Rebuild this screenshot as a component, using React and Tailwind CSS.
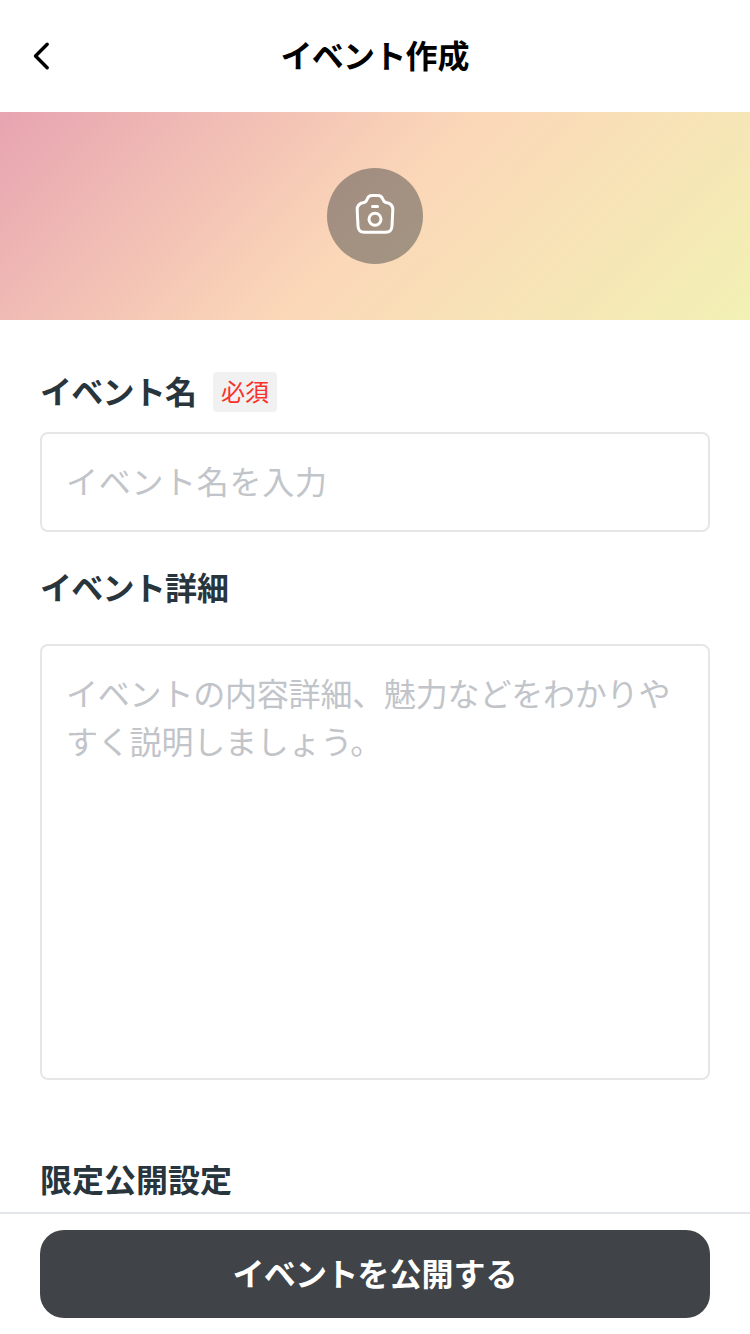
function CameraIcon() {
    return (
        <svg className="h-12 w-12" viewBox="0 0 48 48" fill="none" stroke="white" strokeWidth="3" strokeLinecap="round" strokeLinejoin="round">
            <path d="M21 3.6H27C29.4 3.6 30.8 4.8 31.6 6.8C32.4 9 33.2 10.1 35.2 10.6C39.8 11.4 42 13.6 41.8 18L41 34C40.8 38.2 38.6 40.3 34.6 40.3H13.4C9.4 40.3 7.2 38.2 7 34L6.2 18C6 13.6 8.2 11.4 12.8 10.6C14.8 10.1 15.6 9 16.4 6.8C17.2 4.8 18.6 3.6 21 3.6Z" />
            <path d="M21.5 14.6H26.5" />
            <circle cx="24" cy="27.2" r="6" />
        </svg>
    )
}

function Label({ children }) {
    return <div className="text-[32px] leading-[48px] font-bold text-[#28353d]">{children}</div>
}

function Kana({ children }) {
    return <span className="tracking-[-0.75px]">{children}</span>
}

function App() {
    return (
        <div className="flex h-[1334px] w-[750px] flex-col overflow-hidden bg-white font-['Noto_Sans_CJK_JP','Liberation_Sans',sans-serif]">
            <header className="grid h-28 shrink-0 grid-cols-[96px_1fr_96px] items-center">
                <button className="pl-8" aria-label="戻る">
                    <svg className="h-8 w-5" viewBox="0 0 20 32" fill="none" stroke="black" strokeWidth="3.4" strokeLinecap="round" strokeLinejoin="round">
                        <path d="M15.2 4.2L3.5 16L15.2 27.8" />
                    </svg>
                </button>
                <h1 className="pb-1 text-center text-[32px] leading-[48px] font-bold text-black"><Kana>イベント</Kana>作成</h1>
            </header>
            <div className="flex h-52 shrink-0 items-center justify-center bg-[linear-gradient(135deg,#e7a4b1_0%,#fbd7b8_50%,#f2f1b4_100%)]">
                <button className="flex h-24 w-24 items-center justify-center rounded-full bg-[#4b4b4b]/50" aria-label="カメラ">
                    <CameraIcon />
                </button>
            </div>
            <main className="flex min-h-0 flex-1 flex-col overflow-hidden px-10 pt-[46px]">
                <div className="flex items-center gap-4">
                    <Label><Kana>イベント</Kana>名</Label>
                    <span className="mt-1 h-10 rounded bg-[#f1f1f1] px-2 text-2xl leading-[38px] text-[#f8332c]">必須</span>
                </div>
                <input
                    className="mt-[18px] h-[100px] shrink-0 rounded-lg border-2 border-[#e6e6e6] px-6 pb-1 text-[32px] tracking-[0.7px] placeholder:text-[#c1c4c9]"
                    placeholder="イベント名を入力"
                />
                <div className="mt-[30px] shrink-0">
                    <Label><Kana>イベント</Kana>詳細</Label>
                </div>
                <textarea
                    className="mt-[34px] h-[436px] shrink-0 resize-none rounded-lg border-2 border-[#e6e6e6] px-6 py-[22px] text-[32px] leading-[48px] tracking-[-0.2px] placeholder:text-[#c1c4c9]"
                    placeholder="イベントの内容詳細、魅力などをわかりやすく説明しましょう。"
                />
                <div className="mt-[74px] shrink-0">
                    <Label>限定公開設定</Label>
                </div>
            </main>
            <footer className="h-[122px] shrink-0 border-t-2 border-[#e2e6ea] px-10 pt-4">
                <button className="h-[88px] w-full rounded-3xl bg-[#404347] pb-1 text-[32px] leading-[48px] font-bold text-white"><Kana>イベント</Kana>を公開する</button>
            </footer>
        </div>
    )
}

export default App
